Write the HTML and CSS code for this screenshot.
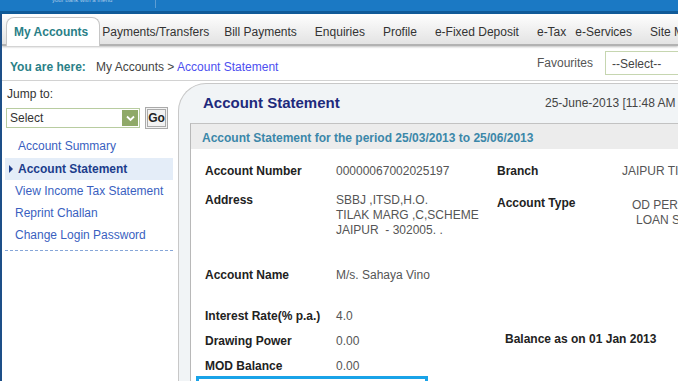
FILE: index.html
```html
<!DOCTYPE html>
<html lang="en">
<head>
	<meta charset="UTF-8">
	<title>Account Statement</title>
	<link rel="stylesheet" href="styles.css">
</head>
<body>
	<div class="topbar">
		<span class="tagline">your bank with a friend</span>
		<span class="divider"></span>
	</div>
	<div class="page">
		<ul class="tabs">
			<li class="active">My Accounts</li>
			<li class="pay">Payments/Transfers</li>
			<li>Bill Payments</li>
			<li>Enquiries</li>
			<li>Profile</li>
			<li>e-Fixed Deposit</li>
			<li class="tax">e-Tax</li>
			<li>e-Services</li>
			<li>Site Map</li>
		</ul>
		<div class="crumbs">
			<span class="here">You are here:</span>
			<span class="path">My Accounts &gt; <a href="#">Account Statement</a></span>
			<span class="fav">Favourites</span>
			<span class="fav-select">--Select--</span>
		</div>
		<div class="main">
			<div class="sidebar">
				<div class="jump-label">Jump to:</div>
				<div class="jump-row">
					<div class="select">
						<span>Select</span>
						<span class="select-arrow">
							<svg width="9" height="7" viewBox="0 0 9 7"><path d="M1 1.5 L4.5 5 L8 1.5" fill="none" stroke="#fff" stroke-width="1.8"/></svg>
						</span>
					</div>
					<span class="go">Go</span>
				</div>
				<ul class="links">
					<li class="indent">Account Summary</li>
					<li class="current">Account Statement</li>
					<li>View Income Tax Statement</li>
					<li>Reprint Challan</li>
					<li>Change Login Password</li>
				</ul>
			</div>
			<div class="panel">
				<div class="panel-head">
					<h1>Account Statement</h1>
					<span class="date">25-June-2013 [11:48 AM IST]</span>
				</div>
				<div class="statement">
					<div class="period">Account Statement for the period 25/03/2013 to 25/06/2013</div>
					<div class="details">
						<div class="row r1">
							<span class="lbl">Account Number</span>
							<span class="val">00000067002025197</span>
							<span class="lbl">Branch</span>
							<span class="val">JAIPUR TILAK MARG</span>
						</div>
						<div class="row r2">
							<span class="lbl">Address</span>
							<span class="val">SBBJ ,ITSD,H.O.<br>TILAK MARG ,C,SCHEME<br>JAIPUR&nbsp; - 302005. .</span>
							<span class="lbl low">Account Type</span>
							<span class="val type"><span class="t1">OD PERSONAL</span><br><span class="t2">LOAN SCHEME</span></span>
						</div>
						<div class="row r3">
							<span class="lbl">Account Name</span>
							<span class="val">M/s. Sahaya Vino</span>
						</div>
						<div class="row r4">
							<span class="lbl">Interest Rate(% p.a.)</span>
							<span class="val">4.0</span>
						</div>
						<div class="row r4">
							<span class="lbl">Drawing Power</span>
							<span class="val">0.00</span>
							<span class="lbl balance">Balance as on 01 Jan 2013</span>
						</div>
						<div class="row r5">
							<span class="lbl">MOD Balance</span>
							<span class="val">0.00</span>
						</div>
						<div class="focus-box"></div>
					</div>
				</div>
			</div>
		</div>
	</div>
</body>
</html>
```
FILE: styles.css
```css
*{
	margin: 0;
	padding: 0;
	box-sizing: border-box;
}
li{
	list-style: none;
}
body{
	width: 678px;
	height: 381px;
	overflow: hidden;
	font-family: "Liberation Sans", Arial, sans-serif;
	font-size: 12px;
	color: #333;
	background: #fff;
}
.topbar{
	height: 14px;
	background: #1b79c4;
	border-bottom: 3px solid #0f5a98;
	display: flex;
	overflow: hidden;
}
.topbar .tagline{
	display: block;
	width: 103px;
	padding-left: 52px;
	box-sizing: content-box;
	font-size: 6px;
	line-height: 6px;
	margin-top: -3px;
	color: #a9c9e8;
	white-space: nowrap;
	overflow: hidden;
}
.topbar .divider{
	width: 1px;
	height: 8px;
	background: #5d9dd3;
}
.page{
	border-left: 2px solid #1d4f88;
	height: 367px;
	overflow: hidden;
}
.tabs{
	display: flex;
	align-items: flex-end;
	height: 32px;
	padding-left: 4px;
	background: linear-gradient(#fefefe, #e3e3e3);
	border-bottom: 2px solid #b2b2b2;
	box-shadow: 0 1px 2px rgba(0,0,0,0.25);
	position: relative;
	white-space: nowrap;
}
.tabs li{
	height: 30px;
	padding: 11px 9px 0;
	line-height: 14px;
	color: #333;
}
.tabs li.active{
	height: 29px;
	margin-bottom: -2px;
	padding: 7px 11px 0 7px;
	background: #fff;
	border: 1px solid #c6c6c6;
	border-bottom: none;
	border-radius: 8px 8px 0 0;
	color: #2a7f87;
	font-weight: bold;
	margin-right: -7px;
}
.tabs li.pay{
	padding-right: 6px;
}
.tabs li.tax{
	padding-right: 0;
}
.crumbs{
	display: flex;
	align-items: flex-start;
	width: 690px;
	height: 35px;
	padding: 14px 0 0 8px;
	border-bottom: 1px solid #d2d2d2;
	white-space: nowrap;
}
.crumbs .here{
	font-weight: bold;
	color: #2a7f87;
	width: 86px;
}
.crumbs .path{
	color: #444;
}
.crumbs .path a{
	color: #4d4ff0;
	text-decoration: none;
}
.crumbs .fav{
	margin-left: auto;
	margin-top: -4px;
	color: #555;
}
.crumbs .fav-select{
	width: 87px;
	height: 24px;
	margin: -9px 0 0 12px;
	padding: 5px 0 0 6px;
	border: 1px solid #c6d6b0;
	color: #444;
}
.main{
	display: flex;
}
.sidebar{
	flex: none;
	width: 176px;
	padding-top: 6px;
}
.jump-label{
	margin-left: 5px;
	line-height: 14px;
	color: #333;
}
.jump-row{
	display: flex;
	margin: 6px 0 0 4px;
}
.select{
	display: flex;
	justify-content: space-between;
	width: 134px;
	height: 20px;
	margin-top: 1px;
	padding: 1px 1px 1px 3px;
	border: 1px solid #b8cca0;
	line-height: 16px;
	color: #333;
}
.select-arrow{
	display: flex;
	align-items: center;
	justify-content: center;
	width: 16px;
	background: #8fa968;
}
.go{
	width: 23px;
	height: 22px;
	margin-left: 5px;
	border: 3px double #aaa;
	background: #f2f2f2;
	font-weight: bold;
	font-size: 12px;
	line-height: 16px;
	text-align: center;
	color: #222;
}
.links{
	margin: 6px 5px 0 3px;
	padding-bottom: 4px;
	border-bottom: 1px dashed #86a6d8;
}
.links li{
	height: 22px;
	line-height: 22px;
	padding-left: 10px;
	color: #3a5fbf;
	white-space: nowrap;
}
.links li.indent{
	padding-left: 13px;
}
.links li.current{
	position: relative;
	margin-top: 1px;
	padding-left: 13px;
	background: #e4edf8;
	font-weight: bold;
	color: #1c3d8c;
}
.links li.current:before{
	content: "";
	position: absolute;
	left: 4px;
	top: 7px;
	border-left: 4px solid #1c3d8c;
	border-top: 4px solid transparent;
	border-bottom: 4px solid transparent;
}
.panel{
	flex: none;
	width: 540px;
	height: 298px;
	margin-top: 2px;
	border: 1px solid #c8c8c8;
	border-right: none;
	border-bottom: none;
	border-radius: 28px 0 0 0;
	background: #f1f4f6;
}
.panel-head{
	display: flex;
	align-items: center;
	height: 39px;
	padding: 0 0 2px 24px;
}
.panel-head h1{
	width: 342px;
	font-size: 15px;
	color: #1e2a7c;
}
.panel-head .date{
	color: #444;
	white-space: nowrap;
}
.statement{
	margin-left: 11px;
	height: 258px;
	overflow: hidden;
	border-top: 1px solid #c2c2c2;
	border-left: 1px solid #b8b8b8;
	background: #fff;
}
.period{
	height: 25px;
	padding: 3px 0 0 11px;
	line-height: 22px;
	background: #ececec;
	font-weight: bold;
	color: #3b87a9;
}
.details{
	padding: 15px 0 0 14px;
}
.row{
	display: grid;
	grid-template-columns: 131px 161px 125px 150px;
	line-height: 15px;
	white-space: nowrap;
}
.r1{ height: 29px; }
.r2{ height: 75px; }
.r3{ height: 41px; }
.r4{ height: 25px; }
.r5{ height: 15px; }
.lbl{
	font-weight: bold;
	color: #222;
}
.val{
	color: #555;
}
.lbl.low{
	padding-top: 3px;
}
.val.type{
	padding-top: 5px;
}
.val.type .t1{
	padding-left: 10px;
}
.val.type .t2{
	padding-left: 14px;
}
.lbl.balance{
	grid-column: 3 / 5;
	margin: -2px 0 0 8px;
}
.focus-box{
	width: 232px;
	height: 20px;
	margin: 2px 0 0 -9px;
	border: 3px solid #19a3e8;
}
```
